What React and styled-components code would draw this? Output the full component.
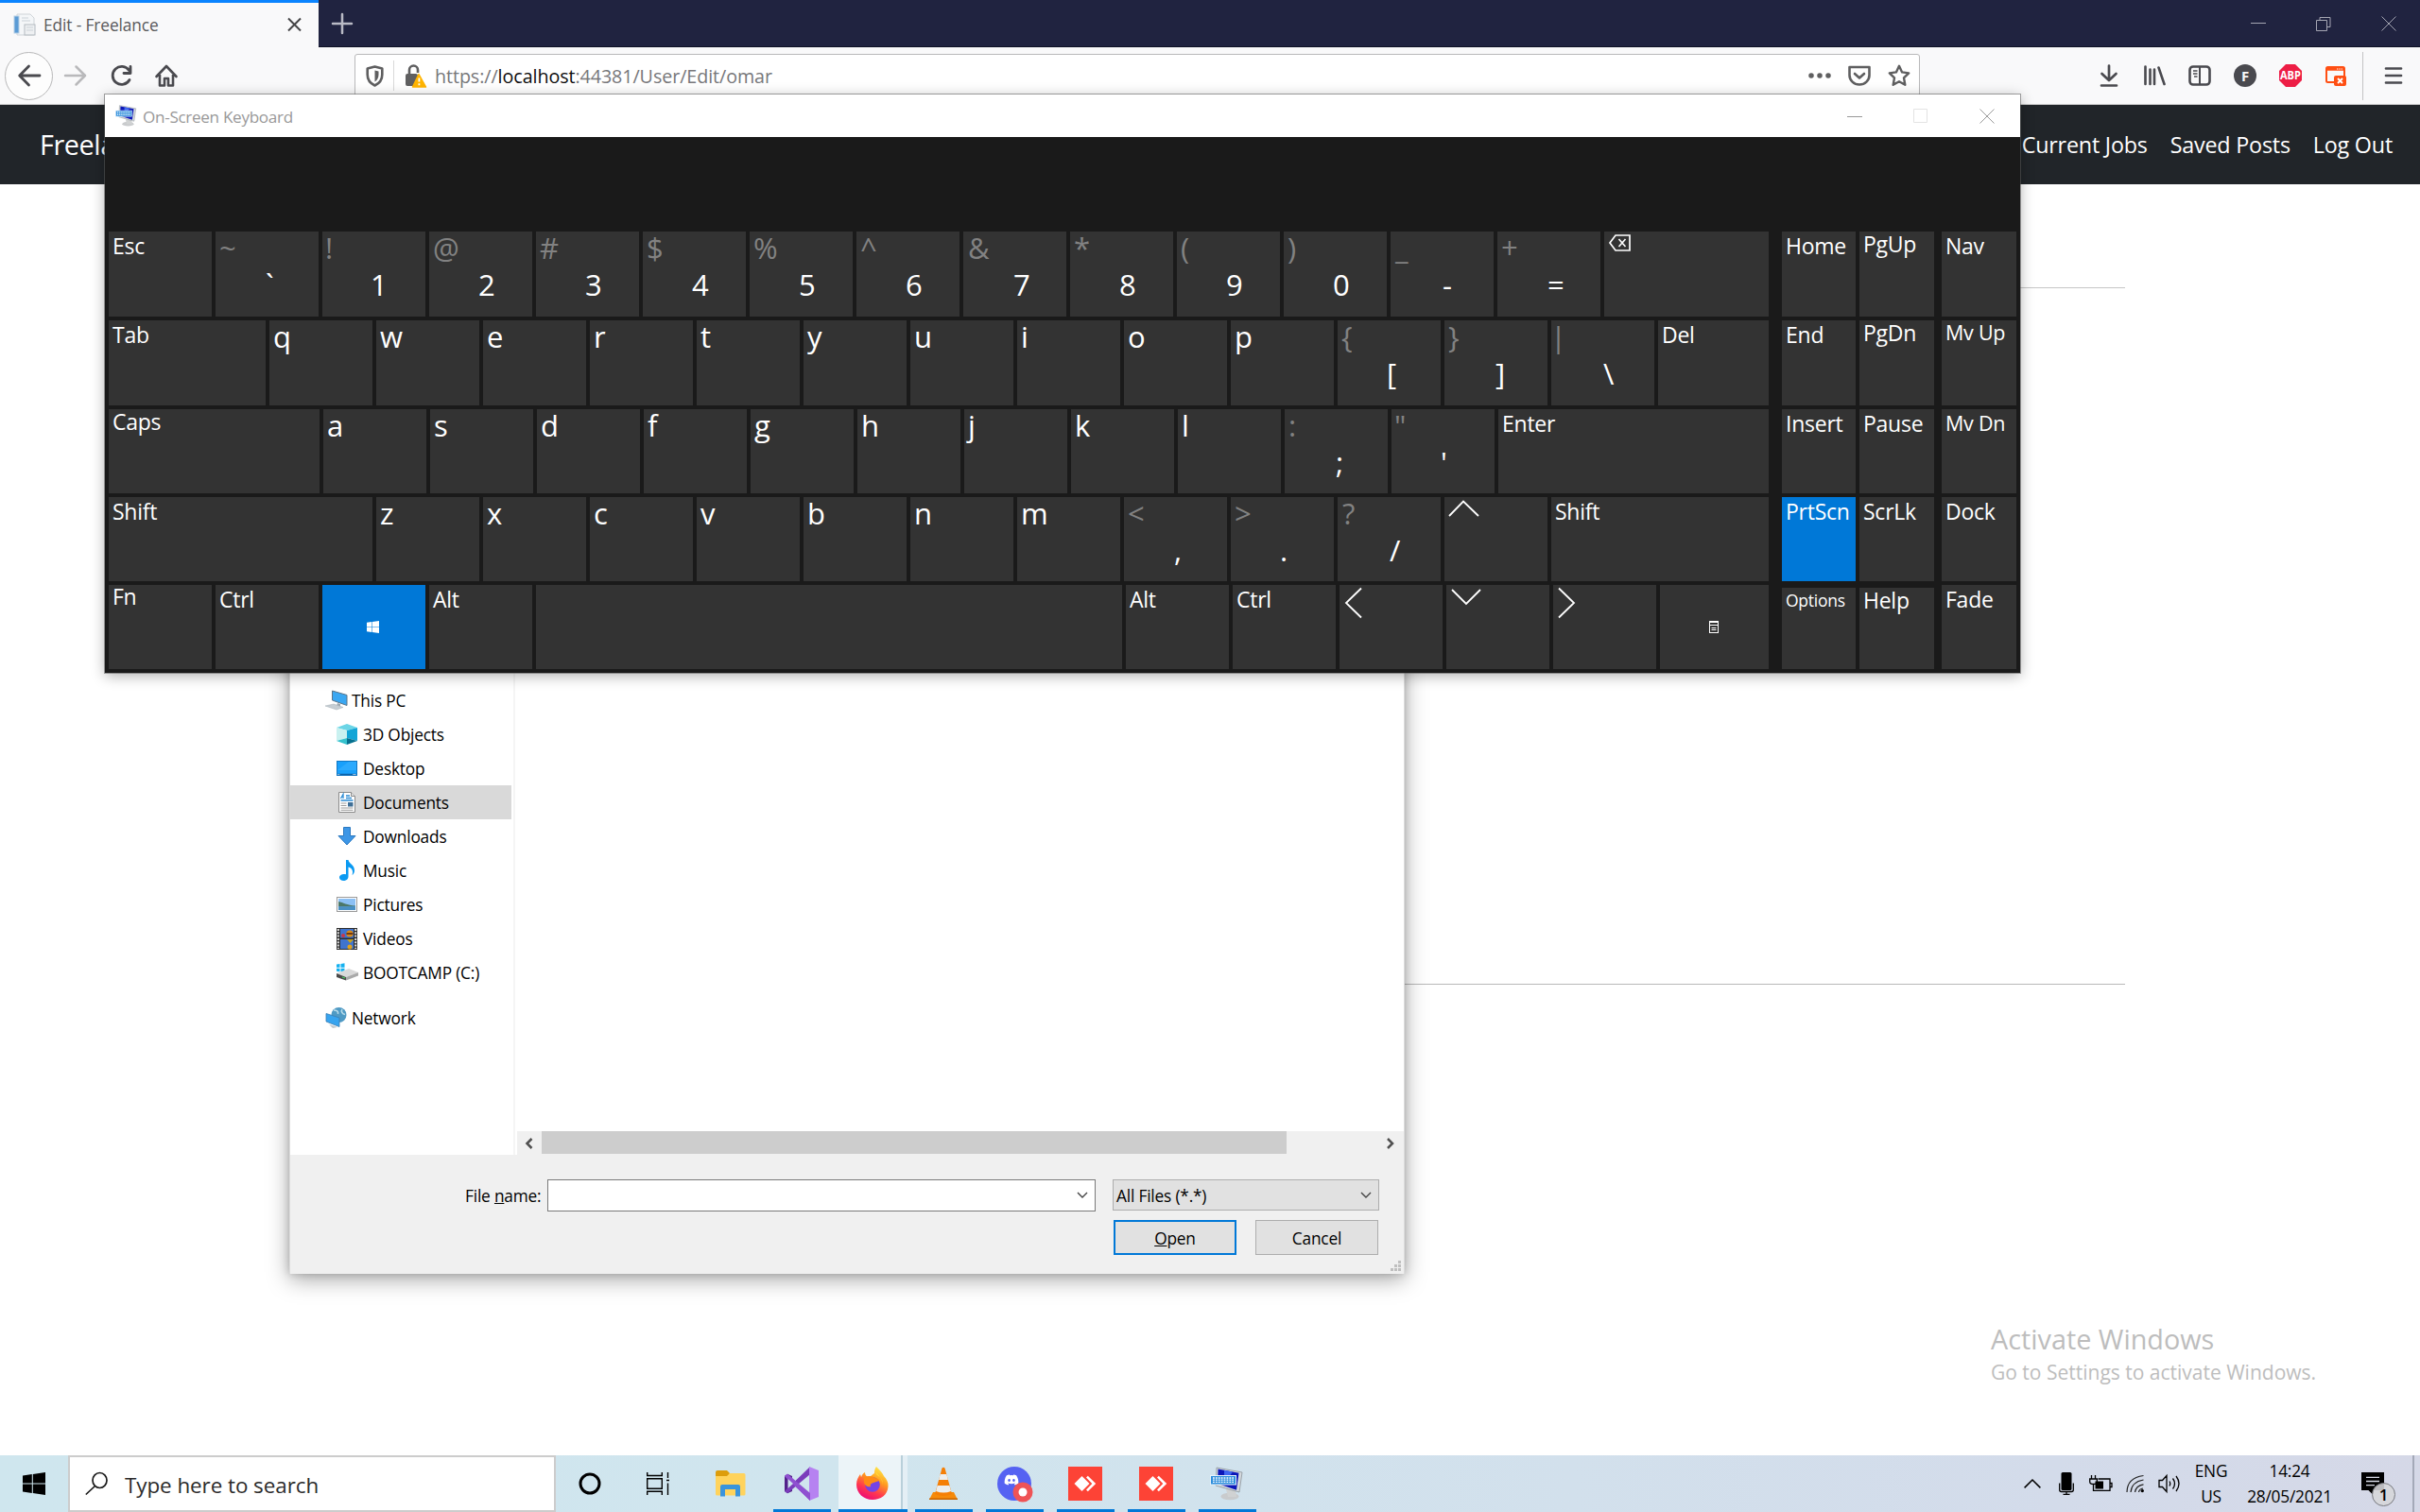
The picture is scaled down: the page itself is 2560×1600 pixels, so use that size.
import React from 'react';
import styled, { createGlobalStyle, css } from 'styled-components';
import { FaDiscord } from 'react-icons/fa';

const GlobalStyle = createGlobalStyle`
  * { box-sizing: border-box; }
  html, body { margin: 0; padding: 0; background: #fff; overflow: hidden; }
  body { font-family: "Open Sans", "Noto Sans", sans-serif; }
  svg { display: block; flex: none; overflow: visible; }
`;

/* ---------- shared text ---------- */
const Text = styled.span`
  font-size: ${(p) => p.$size}px;
  letter-spacing: ${(p) => p.$track || 0}px;
  line-height: ${(p) => p.$line || 24}px;
  color: ${(p) => p.$color || '#000'};
  padding-top: ${(p) => p.$drop || 0}px;
  white-space: pre;
`;

const Desktop = styled.div`
  position: relative;
  width: 2560px;
  height: 1600px;
  display: flex;
  flex-direction: column;
  overflow: hidden;
  background: #fff;
`;

/* ---------- browser ---------- */
const TabStrip = styled.header`
  height: 50px;
  flex: none;
  display: flex;
  align-items: stretch;
  background: #202340;
  border-bottom: 1px solid #0f1126;
`;
const Tab = styled.div`
  width: 337px;
  height: 50px;
  flex: none;
  display: flex;
  align-items: center;
  padding: 0 18px 1px 14px;
  background: #f9f9fa;
  border-top: 3px solid #0a84ff;
`;
const TabTitle = styled(Text)`
  flex: 1;
  margin-left: 8px;
`;
const NewTab = styled.div`
  display: flex;
  align-items: center;
  margin-left: 14px;
`;
const WindowControls = styled.div`
  margin-left: auto;
  display: flex;
  align-items: center;
  gap: ${(p) => p.$gap}px;
  padding-right: ${(p) => p.$end}px;
`;
const Toolbar = styled.div`
  height: 61px;
  flex: none;
  display: flex;
  align-items: center;
  padding-left: 5px;
  background: #f9f9fa;
  border-bottom: 1px solid #ccc;
`;
const BackButton = styled.div`
  width: 51px;
  height: 51px;
  border: 1.5px solid #b8b8b9;
  border-radius: 50%;
  background: #fdfdfd;
  display: flex;
  align-items: center;
  justify-content: center;
`;
const NavIcons = styled.div`
  display: flex;
  gap: 24px;
  margin-left: 12px;
  width: 307px;
`;
const UrlBar = styled.div`
  width: 1656px;
  height: 46px;
  display: flex;
  align-items: center;
  padding: 0 9px 0 11px;
  background: #fff;
  border: 1px solid #b9b9ba;
  border-radius: 3px;
`;
const UrlDivider = styled.i`
  width: 1px;
  height: 32px;
  margin: 0 11px 0 10px;
  background: #d9d9d9;
`;
const UrlText = styled(Text)`
  flex: 1;
  margin-left: 8px;
  b { font-weight: 400; color: #0c0c0d; }
`;
const UrlActions = styled.div`
  display: flex;
  align-items: center;
  gap: 18px;
`;
const Extensions = styled.div`
  display: flex;
  align-items: center;
  gap: 24px;
  margin-left: 188px;
`;
const MenuButton = styled.div`
  height: 51px;
  display: flex;
  align-items: center;
  margin-left: 16px;
  padding-left: 20px;
  border-left: 1px solid #c4c4c5;
`;
const SiteNav = styled.nav`
  height: 84px;
  flex: none;
  display: flex;
  align-items: center;
  justify-content: space-between;
  padding: 0 29px 0 42px;
  background: #212529;
`;
const SiteLinks = styled.div`
  display: flex;
  gap: 24px;
`;
const Page = styled.main`
  flex: 1;
  width: 1936px;
  margin: 0 auto;
  padding-top: 109px;
`;
const Rule = styled.hr`
  height: 1px;
  margin: 0 0 ${(p) => p.$after || 0}px;
  border: 0;
  background: ${(p) => p.$color};
`;
const Watermark = styled.div`
  position: absolute;
  left: 2106px;
  top: 1396px;
  display: flex;
  flex-direction: column;
`;

/* ---------- file dialog ---------- */
const Dialog = styled.section`
  position: absolute;
  left: 306px;
  top: 600px;
  width: 1180px;
  height: 748px;
  display: flex;
  flex-direction: column;
  background: #f0f0f0;
  border-left: 1px solid #dcdcdc;
  border-right: 1px solid #dcdcdc;
  box-shadow: 0 6px 22px rgba(0, 0, 0, 0.34), 0 0 8px rgba(0, 0, 0, 0.18);
`;
const DialogBody = styled.div`
  height: 622px;
  display: flex;
`;
const Tree = styled.div`
  width: 238px;
  padding-top: 123px;
  background: #fff;
  border-right: 2px solid #f5f5f5;
`;
const TreeRow = styled.div`
  width: 234px;
  height: 36px;
  display: flex;
  align-items: center;
  gap: ${(p) => (p.$root ? 4 : 5)}px;
  padding-left: ${(p) => (p.$root ? 37 : 48)}px;
  margin-top: ${(p) => (p.$spaced ? 12 : 0)}px;
  background: ${(p) => (p.$selected ? '#d9d9d9' : 'transparent')};
`;
const Files = styled.div`
  flex: 1;
  display: flex;
  flex-direction: column;
`;
const FileArea = styled.div`
  height: 597px;
  background: #fff;
`;
const ScrollBar = styled.div`
  height: 25px;
  display: flex;
  background: #f0f0f0;
  border-left: 2px solid #fff;
`;
const ScrollArrow = styled.div`
  width: 26px;
  display: flex;
  align-items: center;
  justify-content: center;
`;
const ScrollThumb = styled.div`
  width: 788px;
  height: 24px;
  margin-right: 97px;
  background: #cdcdcd;
`;
const DialogFooter = styled.div`
  display: flex;
  flex-direction: column;
  padding: 26px 26px 0 185px;
`;
const FieldRow = styled.div`
  height: 34px;
  display: flex;
  align-items: flex-start;
`;
const FieldLabel = styled(Text)`
  width: 87px;
`;
const Combo = styled.div`
  width: ${(p) => p.$w}px;
  height: ${(p) => p.$h}px;
  margin-right: ${(p) => p.$gap || 0}px;
  padding: 0 7px 0 3px;
  display: flex;
  align-items: center;
  justify-content: space-between;
  background: ${(p) => (p.$filled ? '#e1e1e1' : '#fff')};
  border: 1px solid ${(p) => (p.$filled ? '#adadad' : '#7a7a7a')};
`;
const ButtonRow = styled.div`
  display: flex;
  justify-content: flex-end;
  gap: 20px;
  margin: 9px 1px 0 0;
`;
const DialogButton = styled.div`
  width: 130px;
  height: 37px;
  display: flex;
  align-items: center;
  justify-content: center;
  padding-top: 1px;
  background: #e1e1e1;
  border: ${(p) => (p.$primary ? '2px solid #0078d7' : '1px solid #adadad')};
`;
const GripHolder = styled.div`
  display: flex;
  justify-content: flex-end;
  margin: 6px -23px 0 0;
`;

/* ---------- on-screen keyboard ---------- */
const Keyboard = styled.section`
  position: absolute;
  left: 111px;
  top: 100px;
  width: 2026px;
  height: 612px;
  display: flex;
  flex-direction: column;
  background: #1a1a1a;
  box-shadow: 0 0 0 1px rgba(90, 90, 90, 0.55), 0 3px 14px rgba(0, 0, 0, 0.32);
`;
const KeyboardTitle = styled.div`
  height: 45px;
  flex: none;
  display: flex;
  align-items: center;
  padding-left: 11px;
  background: #fff;
`;
const KeyboardCaption = styled(Text)`
  margin-left: 6px;
`;
const KeyArea = styled.div`
  display: flex;
  padding: 100px 0 0 4px;
`;
const Board = styled.div`
  width: 1756px;
  margin-right: ${(p) => p.$after || 0}px;
  display: flex;
  flex-direction: column;
  gap: 4px;
`;
const SideBoard = styled(Board)`
  width: auto;
`;
const KeyRow = styled.div`
  height: ${(p) => p.$h}px;
  display: flex;
  align-items: stretch;
  gap: 4px;
`;
const Key = styled.div`
  width: ${(p) => p.$w || 109}px;
  margin-top: ${(p) => p.$inset || 0}px;
  padding-left: 4px;
  display: flex;
  flex-direction: column;
  color: #fff;
  background: ${(p) => (p.$lit ? '#0078d7' : '#333')};
  ${(p) => p.$centered && css`
    align-items: center;
    justify-content: center;
    padding: 0 2px 1px 0;
  `}
`;
const Legend = styled.span`
  font-size: ${(p) => p.$size || 23}px;
  letter-spacing: -0.25px;
  line-height: ${(p) => 30 - 2 * (p.$rise || 0)}px;
  white-space: pre;
`;
const Glyph = styled.span`
  font-size: 31px;
  line-height: 34px;
  margin-left: ${(p) => p.$shift || 0}px;
  color: ${(p) => (p.$dim ? '#828282' : '#fff')};
`;
const LowerGlyph = styled(Glyph)`
  margin: 5px 0 0 ${(p) => 48 + (p.$shift || 0)}px;
`;

/* ---------- taskbar ---------- */
const Taskbar = styled.footer`
  height: 60px;
  flex: none;
  display: flex;
  background: linear-gradient(90deg, #cfe6ee 0%, #d0e5ee 35%, #d2e0ec 65%, #d3dbea 85%, #d5d8e7 100%);
`;
const BarCell = styled.div`
  width: ${(p) => p.$w}px;
  display: flex;
  flex-direction: column;
  align-items: center;
  justify-content: center;
`;
const Search = styled.div`
  width: 516px;
  display: flex;
  align-items: center;
  padding-left: 16px;
  gap: 18px;
  background: #fff;
  border: 2px solid #ccc;
`;
const Apps = styled.div`
  display: flex;
  margin-left: 4px;
`;
const AppButton = styled.div`
  width: ${(p) => (p.$active ? 73 : 61)}px;
  margin: 0 ${(p) => (p.$active ? 1 : 7)}px;
  display: flex;
  align-items: center;
  justify-content: center;
  border-bottom: 3px solid ${(p) => (p.$idle ? 'transparent' : '#0078d7')};
  padding: 3px 2px 0 0;
  ${(p) => p.$active && css`
    background: linear-gradient(90deg, #ecf4f8 66px, #b9d0da 66px, #b9d0da 68px, #e4eff5 68px);
  `}
`;
const Tray = styled.div`
  display: flex;
  margin-left: auto;
`;
const Notifications = styled.div`
  width: 75px;
  padding: 18px 0 0 21px;
  position: relative;
`;
const Badge = styled.div`
  position: absolute;
  left: 32px;
  top: 29px;
  width: 25px;
  height: 25px;
  display: flex;
  align-items: center;
  justify-content: center;
  border: 1px solid #77797f;
  border-radius: 50%;
  background: rgba(214, 214, 217, 0.88);
`;
const BadgeCount = styled(Text)`
  font-weight: 600;
`;
const ShowDesktop = styled.div`
  width: 8px;
  border-left: 2px solid #a4a9b8;
`;

/* ---------- drawings ---------- */
const Line = ({ w, h, d, color, sw = 1, vb, cap, fill = 'none' }) => (
  <svg width={w} height={h} viewBox={vb || `0 0 ${w} ${h}`}>
    <path d={d} stroke={color} strokeWidth={sw} fill={fill} strokeLinecap={cap} strokeLinejoin={cap} />
  </svg>
);

const PageIcon = () => (
  <svg width="24" height="24" viewBox="0 0 24 24">
    <path d="M4 1h14l4 4v18H4z" fill="#f4f6f8" stroke="#cfd4d8" />
    <rect x="1" y="3" width="5" height="18" fill="#5b9bd5" stroke="#b5cfe5" />
    <rect x="12" y="12" width="11" height="11" fill="#eef0f2" stroke="#b3bac0" />
    <path d="M14 15h7M14 18h7M9 5h7M9 8h9" stroke="#cbd2d8" />
  </svg>
);

const KeyboardMonitor = ({ size = 24 }) => (
  <svg width={size} height={size} viewBox="0 0 36 36">
    <ellipse cx="21" cy="31.500" rx="9.500" ry="3.800" fill="#c9cbcd" />
    <path d="M17 24h10l1 8h-9z" fill="#d0d2d3" />
    <path d="M7 1l27 5-3 21L6 20z" fill="#d4d8dc" stroke="#8d959c" strokeWidth=".8" />
    <path d="M8.500 2.500l22 4.200-2.500 18L8 18z" fill="#0c17b8" />
    <path d="M15 3.800l9 1.700-9 12z" fill="#3f66f0" />
    <rect x=".5" y="9.500" width="27" height="9.500" fill="#2f8fdc" stroke="#e7f3fc" />
    <path d="M3 12h22M3 14.200h22M3 16.400h22" stroke="#fff" strokeWidth="1.300" strokeDasharray="1.800 1.100" />
  </svg>
);

const LockWarning = () => (
  <svg width="24" height="24" viewBox="0 0 24 24">
    <path d="M5 11V6a4.500 4.500 0 0 1 9 0v3" fill="none" stroke="#5f5f60" strokeWidth="2.600" />
    <rect x="1" y="10" width="13" height="13" rx="2" fill="#5f5f60" />
    <path d="M15 10.500L22.500 24h-14z" fill="#ffb400" stroke="#ffb400" strokeWidth="1.500" strokeLinejoin="round" />
    <path d="M15.400 14.500v4M15.400 20.200v2" stroke="#fff" strokeWidth="1.800" />
  </svg>
);

const Shield = () => (
  <svg width="19" height="23" viewBox="0 0 19 23">
    <path d="M9.500 1.500L17.300 3.500V10c0 6-3.500 9.500-7.800 11.500C5.200 19.500 1.700 16 1.700 10V3.500z" fill="none" stroke="#5f5f60" strokeWidth="2.600" strokeLinejoin="round" />
    <path d="M9.500 5.500L13.500 6.500V10c0 3.800-1.600 6-4 7.500z" fill="#5f5f60" />
  </svg>
);

const Library = () => (
  <svg width="24" height="24" viewBox="0 0 24 24">
    <path d="M2.500 2.500v18.500M7.500 5.500v15.500M12 5.500v15.500M16.500 3.500l6 17.500" stroke="#4a4a4f" strokeWidth="2.600" strokeLinecap="round" />
  </svg>
);

const SidebarIcon = () => (
  <svg width="24" height="24" viewBox="0 0 24 24">
    <rect x="1.500" y="2.500" width="21" height="19" rx="3.500" fill="none" stroke="#4a4a4f" strokeWidth="2.600" />
    <path d="M12 3v18" stroke="#4a4a4f" strokeWidth="2" />
    <path d="M5 7h4.500M5 10h4.500M6 13h3.500" stroke="#4a4a4f" strokeWidth="1.500" />
  </svg>
);

const RoundF = () => (
  <svg width="24" height="24" viewBox="0 0 24 24">
    <circle cx="12" cy="12" r="12" fill="#4a4a4f" />
    <text x="12" y="17.500" textAnchor="middle" fontFamily="Open Sans, sans-serif" fontWeight="700" fontSize="15" fill="#f9f9fa">F</text>
  </svg>
);

const Abp = () => (
  <svg width="24" height="24" viewBox="0 0 24 24">
    <path d="M7 0h10l7 7v10l-7 7H7l-7-7V7z" fill="#ed1e45" />
    <text x="12" y="16" textAnchor="middle" textLength="22" lengthAdjust="spacingAndGlyphs" fontFamily="Open Sans, sans-serif" fontWeight="700" fontSize="12" fill="#fff">ABP</text>
  </svg>
);

const PopupBlocked = () => (
  <svg width="24" height="24" viewBox="0 0 24 24">
    <rect x="2" y="3" width="19" height="16" rx="1.500" fill="none" stroke="#ff4f13" strokeWidth="2" />
    <path d="M2 5h19" stroke="#ff4f13" strokeWidth="3.500" />
    <path d="M13 5h6" stroke="#fff" strokeWidth="1" strokeDasharray="1.300 1" />
    <rect x="10" y="12" width="13" height="11" rx="2" fill="#ff4f13" />
    <path d="M14 15l5 5M19 15l-5 5" stroke="#fff" strokeWidth="1.900" />
  </svg>
);

const WinLogo = ({ size, color = '#000' }) => (
  <svg width={size} height={size} viewBox="0 0 24 24">
    <path d="M0 3.400L9.800 2v9.500H0zM10.800 1.900L24 0v11.500H10.800zM0 12.500h9.800V22L0 20.600zM10.800 12.500H24V24l-13.200-1.900z" fill={color} />
  </svg>
);

const treeIcons = {
  pc: (
    <svg width="24" height="24" viewBox="0 0 24 24">
      <path d="M7.500 2L23 6.500v11L7.500 12z" fill="#3aa7f2" stroke="#5c7487" />
      <path d="M13 15l3 1v3l-4-1z" fill="#9aa6ae" />
      <path d="M0 18l9-2 10 3.500-7 2.500z" fill="#c5cdd3" stroke="#a7b0b7" strokeWidth=".5" />
    </svg>
  ),
  cube: (
    <svg width="24" height="24" viewBox="0 0 24 24">
      <path d="M1 5l11-4 11 4-11 3z" fill="#6bd5e6" />
      <path d="M1 5l11 3v8L1 19z" fill="#c9f1f0" />
      <path d="M23 5L12 8v8l11 3z" fill="#12a5d6" />
      <path d="M1 19l11-3v7z" fill="#35c2cd" />
      <path d="M23 19l-11-3v7z" fill="#04708f" />
    </svg>
  ),
  desktop: (
    <svg width="24" height="24" viewBox="0 0 24 24">
      <rect x="1.500" y="4.500" width="21" height="15" fill="#19a0fb" stroke="#1478c4" />
      <path d="M2 14L14 5h8v9z" fill="#3bb0ff" opacity=".6" />
      <path d="M2 18.500h20" stroke="#0b62a8" strokeWidth="1.500" />
      <path d="M2.500 18.500h2M18.500 18.500h3" stroke="#fff" strokeDasharray="1 .8" />
    </svg>
  ),
  docs: (
    <svg width="24" height="24" viewBox="0 0 24 24">
      <path d="M3.500 1.500h13l4 4v17h-17z" fill="#fff" stroke="#8a8a8a" />
      <path d="M16.500 1.500v4h4" fill="#e4e4e4" stroke="#8a8a8a" />
      <path d="M5.500 8L8 3.500V8M11 5h4M11 7.500h6M5.500 10h13" stroke="#2a8bd4" strokeWidth="1.300" fill="none" />
      <path d="M5.500 13h6M5.500 15.500h6M5.500 18h13M5.500 20.300h13" stroke="#9b9b9b" />
      <rect x="13" y="12" width="5.500" height="4.500" fill="#3f6f96" />
    </svg>
  ),
  down: (
    <svg width="24" height="24" viewBox="0 0 24 24">
      <path d="M8.500 2.500h7v9H21L12 21 3 11.500h5.500z" fill="#3d96e6" stroke="#2a78c0" />
    </svg>
  ),
  music: (
    <svg width="24" height="24" viewBox="0 0 24 24">
      <path d="M11 1h2.500c.5 4 6.500 5 6.500 11 0 2.500-1 4-2.500 5 1.500-4 0-7.500-4-8.500v10c0 3-2.500 4.500-5 4.500S4 21.500 4 19.500 6.500 16 9 16c.8 0 1.400.1 2 .3z" fill="#0a9af2" />
    </svg>
  ),
  pics: (
    <svg width="24" height="24" viewBox="0 0 24 24">
      <rect x="1.500" y="4.500" width="21" height="15" fill="#fff" stroke="#9a9a9a" />
      <rect x="3" y="6" width="18" height="12" fill="#8cc0f4" />
      <path d="M3 9c5 1 9 4 18 4.500v1H3z" fill="#4d7868" />
      <path d="M3 14c7 1 11-.5 18 0v4H3z" fill="#4a90c4" />
    </svg>
  ),
  video: (
    <svg width="24" height="24" viewBox="0 0 24 24">
      <rect x="1" y="1" width="22" height="23" fill="#2e2e2e" />
      <rect x="5" y="2" width="14" height="9.500" fill="#3f74cf" />
      <rect x="5" y="13" width="14" height="10" fill="#3f74cf" />
      <path d="M2.800 2v21M21.200 2v21" stroke="#e6e6e6" strokeWidth="2" strokeDasharray="2 1.300" />
      <circle cx="15" cy="7" r="3.600" fill="#d98a18" />
      <path d="M11.500 7h7" stroke="#502010" strokeWidth="1.500" />
      <circle cx="8" cy="9" r="2" fill="#c8384a" />
      <path d="M12 13h7l-3.500 4z" fill="#c7a31c" />
      <circle cx="15" cy="21" r="2.500" fill="#e0a21c" />
    </svg>
  ),
  disk: (
    <svg width="24" height="24" viewBox="0 0 24 24">
      <path d="M1 3.500L4.500 3v3.700H1zM5.500 2.900L9.500 2.300v4.400h-4zM1 7.700h3.500v3.500L1 10.800zM5.500 7.700h4v4l-4-.5z" fill="#14b1f0" />
      <path d="M1 13l13-5 10 4-13 5z" fill="#d9d9d9" />
      <path d="M1 13l10 4v3.500L1 17z" fill="#4a4a4a" />
      <path d="M11 17l13-5v3.500l-13 5z" fill="#a9a9a9" />
      <path d="M7 17l3 1" stroke="#46d05a" strokeWidth="1.200" />
    </svg>
  ),
  network: (
    <svg width="24" height="24" viewBox="0 0 24 24">
      <circle cx="14.500" cy="9" r="8" fill="#4f9ac4" />
      <path d="M9 4c4 0 5 1.500 4.500 4M18 3c-1.500 2 0 5 3 5.500" stroke="#b6dbea" strokeWidth="1.600" fill="none" />
      <path d="M1 7.500L15 12v9.500L1 16z" fill="#37a4ef" stroke="#3b7fb4" strokeWidth=".8" />
      <path d="M4 19l5 1.500 4 1.500-5 1z" fill="#c2c8cc" />
    </svg>
  ),
};

const FolderIcon = () => (
  <svg width="33" height="28" viewBox="0 0 33 28">
    <path d="M1 2a2 2 0 0 1 2-2h10l3 3-2 4H1z" fill="#dd9d0c" />
    <path d="M1 6h12l3-3h15a1.500 1.500 0 0 1 1.500 1.500V25a1.500 1.500 0 0 1-1.500 1.500H2.500A1.500 1.500 0 0 1 1 25z" fill="#ffd35c" />
    <path d="M6 27.500V17a2 2 0 0 1 2-2h17a2 2 0 0 1 2 2v10.500h-5V20H11v7.500z" fill="#3a94dc" />
  </svg>
);
const VisualStudio = () => (
  <svg width="36" height="36" viewBox="0 0 36 36">
    <path d="M0 10l3-2.200L8 10v16l-5 2.200L0 26z" fill="#52218a" />
    <path d="M0 10l3-2.200L27 31v5z" fill="#9353d6" />
    <path d="M0 26l3 2.200L27 8V0z" fill="#7a3cbb" />
    <path d="M26 0l10 4v28l-10 4z" fill="#b682f1" />
    <path d="M3 7.800L27 28v8L0 10z" fill="#8f50d0" />
    <path d="M3.500 13v10l5.500-5z" fill="#cfe4ee" />
  </svg>
);
const Firefox = () => (
  <svg width="36" height="36" viewBox="0 0 36 36">
    <defs>
      <linearGradient id="fox" x1=".8" y1="0" x2=".3" y2="1">
        <stop offset="0" stopColor="#fff44f" />
        <stop offset=".4" stopColor="#ff9a1f" />
        <stop offset=".72" stopColor="#ff3750" />
        <stop offset="1" stopColor="#eb0878" />
      </linearGradient>
    </defs>
    <path d="M22 0c4 4 6 6 8 10 3 3 5 7 4.500 11C34 30 26.500 35 18 35 8.500 35 1 28 1 19c0-5 2-8 4-11l1 3c1-3 3-4.500 4-5 0 2 1 4 3 5 3 0 5-3 7-4 0-3 .5-5 2-7z" fill="url(#fox)" />
    <circle cx="18" cy="19" r="7.800" fill="#7543e4" />
    <path d="M9 11c5-2 9-1 12 1 2 1 4 1 4 3l-6 2c-3 1-4 2-3 4-3 1-6-1-7-4z" fill="#ff8a16" />
    <path d="M21 5c5 5 8 10 8 15 0-4-1-7-3-9-3-2-5-3-5-6z" fill="#ffd93a" />
  </svg>
);
const Cone = () => (
  <svg width="32" height="36" viewBox="0 0 32 36">
    <path d="M5 27h22l4 8H1z" fill="#f58a0b" />
    <path d="M1 33.500h30V35H1z" fill="#c96400" />
    <path d="M14.500 1.500q1.500-1.500 3 0L25 29q-9 4-18 0z" fill="#f57f06" />
    <path d="M12.700 8h6.600l1.600 6h-9.800zM9.600 20h12.800l1.700 6q-8 3-16 0z" fill="#eceeee" />
  </svg>
);
const DiscordIcon = () => (
  <svg width="36" height="36" viewBox="0 0 36 36">
    <circle cx="18" cy="18" r="18" fill="#5562f2" />
    <FaDiscord x="7" y="6" width="23" height="24" color="#fff" />
    <circle cx="27" cy="27" r="10.500" fill="#ef5355" />
    <circle cx="27" cy="27" r="4.500" fill="#fff" />
  </svg>
);
const AnyDesk = () => (
  <svg width="36" height="36" viewBox="0 0 36 36">
    <rect width="36" height="36" fill="#fd4336" />
    <path d="M14.500 10l8 8-8 8-8-8z" fill="#fff" />
    <path d="M19 11.500l1.800-1.800L29.200 18l-8.400 8.300L19 24.500l6.300-6.500z" fill="#fff" />
  </svg>
);

/* ---------- keyboard data ---------- */
const rows = [
  { h: 90, keys: [{ t: 'Esc' }, ['~', '`', 0, 1], ['!', '1', -1, -1], ['@', '2'], ['#', '3'], ['$', '4'], ['%', '5'], ['^', '6'], ['&', '7', 1, 1], ['*', '8'], ['(', '9'], [')', '0'], ['_', '-', 1, 3], ['+', '=', 0, 1], { icon: 'back', w: 174 }] },
  { h: 90, keys: [{ t: 'Tab', w: 166 }, 'q', 'w', 'e', 'r', 't', 'y', 'u', 'i', 'o', 'p', ['{', '['], ['}', ']', 0, 2], ['|', '\\', -5, 3], { t: 'Del', w: 117 }] },
  { h: 89, keys: [{ t: 'Caps', w: 223, rise: 2 }, 'a', 's', 'd', 'f', 'g', 'h', 'j', 'k', 'l', [':', ';', 0, 2], ['"', "'", -1, 0], { t: 'Enter', w: 286 }] },
  { h: 89, keys: [{ t: 'Shift', w: 279 }, 'z', 'x', 'c', 'v', 'b', 'n', 'm', ['<', ',', 0, 1], ['>', '.'], ['?', '/', 1, 3], { icon: 'up' }, { t: 'Shift', w: 230 }] },
  { h: 89, keys: [{ t: 'Fn', rise: 2.5 }, { t: 'Ctrl' }, { icon: 'win', lit: true, mid: true }, { t: 'Alt' }, { t: '', w: 620 }, { t: 'Alt' }, { t: 'Ctrl' }, { icon: 'left' }, { icon: 'down' }, { icon: 'right' }, { icon: 'menu', mid: true, w: 115 }] },
];
const sideRows = [
  [{ t: 'Home', w: 78 }, { t: 'PgUp', rise: 2, w: 79 }],
  [{ t: 'End', w: 78 }, { t: 'PgDn', rise: 2, w: 79 }],
  [{ t: 'Insert', w: 78 }, { t: 'Pause', w: 79 }],
  [{ t: 'PrtScn', lit: true, w: 78 }, { t: 'ScrLk', w: 79 }],
  [{ t: 'Options', size: 17.5, rise: 2, inset: 3, w: 78 }, { t: 'Help', rise: 2, inset: 3, w: 79 }],
];
const farRows = [
  { t: 'Nav', w: 79 },
  { t: 'Mv Up', size: 21.5, rise: 2, w: 79 },
  { t: 'Mv Dn', size: 21.5, w: 79 },
  { t: 'Dock', w: 79 },
  { t: 'Fade', w: 79 },
];
const heights = rows.map((r) => r.h);

const keyIcons = {
  back: (
    <svg width="30" height="24" viewBox="0 0 30 24">
      <path d="M2 9L8 1h15v16H8z" transform="translate(0 3)" fill="none" stroke="#fff" strokeWidth="1.700" />
      <path d="M11.500 8l7 8M18.500 8l-7 8" stroke="#fff" strokeWidth="1.600" />
    </svg>
  ),
  up: <Line w={34} h={24} d="M1 20L16 4.500 32 20" color="#fff" sw={1.800} />,
  down: <Line w={34} h={24} d="M2 5L17 20 32 5" color="#fff" sw={1.800} />,
  left: <Line w={24} h={38} d="M19 3.500L3 19 19 34.500" color="#fff" sw={1.800} />,
  right: <Line w={24} h={38} d="M2 3.500L18 19 2 34.500" color="#fff" sw={1.800} />,
  win: <WinLogo size={13} color="#fff" />,
  menu: (
    <svg width="10" height="13" viewBox="0 0 10 13">
      <rect x=".5" y=".5" width="9" height="12" fill="none" stroke="#fff" />
      <path d="M2.500 7.500h5M2.500 9.500h5M0 1.500h10M0 4.500h10" stroke="#fff" />
    </svg>
  ),
};

function KeyCap({ data }) {
  if (typeof data === 'string') {
    return <Key><Glyph>{data}</Glyph></Key>;
  }
  if (Array.isArray(data)) {
    return (
      <Key>
        <Glyph $dim $shift={data[2]}>{data[0]}</Glyph>
        <LowerGlyph $shift={data[3]}>{data[1]}</LowerGlyph>
      </Key>
    );
  }
  return (
    <Key $w={data.w} $lit={data.lit} $inset={data.inset} $centered={data.mid}>
      {data.icon ? keyIcons[data.icon] : <Legend $size={data.size} $rise={data.rise}>{data.t}</Legend>}
    </Key>
  );
}

const tree = [
  { icon: 'pc', label: 'This PC', root: true },
  { icon: 'cube', label: '3D Objects' },
  { icon: 'desktop', label: 'Desktop' },
  { icon: 'docs', label: 'Documents', selected: true },
  { icon: 'down', label: 'Downloads' },
  { icon: 'music', label: 'Music' },
  { icon: 'pics', label: 'Pictures' },
  { icon: 'video', label: 'Videos' },
  { icon: 'disk', label: 'BOOTCAMP (C:)' },
  { icon: 'network', label: 'Network', root: true, spaced: true },
];

const Ui = (props) => <Text $size={17.3} $track={-0.18} $line={24} $drop={2} {...props} />;

function Browser() {
  return (
    <>
      <TabStrip>
        <Tab>
          <PageIcon />
          <TabTitle $size={17.3} $track={-0.1} $color="#5a5a5c" $drop={1}>Edit - Freelance</TabTitle>
          <Line w={15} h={14} d="M1 .5L14 13.500M14 .5L1 13.500" color="#444446" sw={2} />
        </Tab>
        <NewTab><Line w={22} h={22} d="M11 1v20M1 11h20" color="#b9bac5" sw={2.500} cap="round" /></NewTab>
        <WindowControls $gap={53} $end={25}>
          <Line w={16} h={16} d="M0 7.500h16" color="#a5a6b3" />
          <Line w={16} h={16} d="M.5 4.500h11v11H.5zM4 4.500v-3h11v10h-3" color="#a5a6b3" />
          <Line w={16} h={16} d="M.5 .5l15 15M15.500 .5l-15 15" color="#a5a6b3" />
        </WindowControls>
      </TabStrip>
      <Toolbar>
        <BackButton><Line w={24} h={24} d="M23 12H2M11.500 2L1.700 12l9.800 10" color="#4a4a4f" sw={2.800} cap="round" /></BackButton>
        <NavIcons>
          <Line w={24} h={24} d="M1 12h21M12.500 2.500L22 12l-9.500 9.500" color="#b9b9bb" sw={2.500} cap="round" />
          <Line w={24} h={24} d="M21 16.500A9.500 9.500 0 1 1 20.500 6.500M22 2.500v7h-7" color="#4a4a4f" sw={2.800} cap="round" />
          <Line w={24} h={24} d="M1.500 13L12 2l10.500 11M5 11v11.500h5V15h4v7.500h5V11" color="#4a4a4f" sw={2.600} cap="round" />
        </NavIcons>
        <UrlBar>
          <Shield />
          <UrlDivider />
          <LockWarning />
          <UrlText $size={19.7} $track={-0.07} $color="#77777a" $line={28} $drop={1}>https://<b>localhost</b>:44381/User/Edit/omar</UrlText>
          <UrlActions>
            <Line w={24} h={24} d="M3 12h.01M12 12h.01M21 12h.01" color="#5f5f60" sw={5.500} cap="round" />
            <Line w={24} h={24} d="M1.500 3h21v8.500a10.500 10 0 0 1-21 0zM7 10l5 4.500 5-4.500" color="#5f5f60" sw={2.600} cap="round" />
            <Line w={24} h={24} d="M12 1.800l3.100 6.600 7.100 1-5.200 5 1.300 7.400L12 18.200 5.700 21.800 7 14.400l-5.200-5 7.100-1z" color="#5f5f60" sw={2.400} cap="round" />
          </UrlActions>
        </UrlBar>
        <Extensions>
          <Line w={24} h={24} d="M12 1.500v15M4.500 10l7.500 7 7.500-7M4 22.500h16" color="#4a4a4f" sw={2.700} cap="round" />
          <Library />
          <SidebarIcon />
          <RoundF />
          <Abp />
          <PopupBlocked />
        </Extensions>
        <MenuButton><Line w={24} h={24} d="M4 4.500h16M4 12h16M4 19.500h16" color="#4a4a4f" sw={2.700} cap="round" /></MenuButton>
      </Toolbar>
      <SiteNav>
        <Text $size={28.8} $track={-0.4} $color="#fff" $line={40}>Freelance</Text>
        <SiteLinks>
          <Text $size={23.3} $track={-0.2} $color="#fff" $line={40}>Current Jobs</Text>
          <Text $size={23.3} $track={-0.2} $color="#fff" $line={40}>Saved Posts</Text>
          <Text $size={23.3} $track={-0.2} $color="#fff" $line={40}>Log Out</Text>
        </SiteLinks>
      </SiteNav>
      <Page>
        <Rule $color="#c6c6c6" $after={736} />
        <Rule $color="#b8b8b8" />
      </Page>
    </>
  );
}

function OpenDialog() {
  return (
    <Dialog>
      <DialogBody>
        <Tree>
          {tree.map((n) => (
            <TreeRow key={n.label} $root={n.root} $selected={n.selected} $spaced={n.spaced}>
              {treeIcons[n.icon]}
              <Ui>{n.label}</Ui>
            </TreeRow>
          ))}
        </Tree>
        <Files>
          <FileArea />
          <ScrollBar>
            <ScrollArrow><Line w={10} h={12} d="M7.500 1l-5 5 5 5" color="#505050" sw={2.500} /></ScrollArrow>
            <ScrollThumb />
            <ScrollArrow><Line w={10} h={12} d="M2 1l5 5-5 5" color="#505050" sw={2.500} /></ScrollArrow>
          </ScrollBar>
        </Files>
      </DialogBody>
      <DialogFooter>
        <FieldRow>
          <FieldLabel $size={17.3} $track={-0.18} $line={26} $drop={5}>File <u>n</u>ame:</FieldLabel>
          <Combo $w={580} $h={34} $gap={18}>
            <span />
            <Line w={12} h={8} d="M1 1l5 5 5-5" color="#444" sw={1.400} />
          </Combo>
          <Combo $w={282} $h={33} $filled>
            <Ui>All Files (*.*)</Ui>
            <Line w={12} h={8} d="M1 1l5 5 5-5" color="#444" sw={1.400} />
          </Combo>
        </FieldRow>
        <ButtonRow>
          <DialogButton $primary><Ui><u>O</u>pen</Ui></DialogButton>
          <DialogButton><Ui>Cancel</Ui></DialogButton>
        </ButtonRow>
        <GripHolder>
          <Line w={11} h={11} d="M8 0h3v3H8zM8 4h3v3H8zM8 8h3v3H8zM4 4h3v3H4zM4 8h3v3H4zM0 8h3v3H0z" color="none" fill="#bfbfbf" />
        </GripHolder>
      </DialogFooter>
    </Dialog>
  );
}

function OnScreenKeyboard() {
  return (
    <Keyboard>
      <KeyboardTitle>
        <KeyboardMonitor size={23} />
        <KeyboardCaption $size={17.1} $track={-0.3} $color="#999" $drop={2}>On-Screen Keyboard</KeyboardCaption>
        <WindowControls $gap={54} $end={27}>
          <Line w={16} h={16} d="M0 8.500h16" color="#999" />
          <Line w={16} h={16} d="M.5 .5h14v14H.5z" color="#e3e3e3" />
          <Line w={16} h={16} d="M.5 .5l15 15M15.500 .5l-15 15" color="#999" />
        </WindowControls>
      </KeyboardTitle>
      <KeyArea>
        <Board $after={14}>
          {rows.map((row, i) => (
            <KeyRow key={i} $h={row.h}>
              {row.keys.map((k, j) => <KeyCap key={j} data={k} />)}
            </KeyRow>
          ))}
        </Board>
        <SideBoard $after={8}>
          {sideRows.map((row, i) => (
            <KeyRow key={i} $h={heights[i]}>
              {row.map((k) => <KeyCap key={k.t} data={k} />)}
            </KeyRow>
          ))}
        </SideBoard>
        <SideBoard>
          {farRows.map((k, i) => (
            <KeyRow key={k.t} $h={heights[i]}><KeyCap data={k} /></KeyRow>
          ))}
        </SideBoard>
      </KeyArea>
    </Keyboard>
  );
}

function SystemTaskbar() {
  return (
    <Taskbar>
      <BarCell $w={72}><WinLogo size={24} /></BarCell>
      <Search>
        <Line w={24} h={24} d="M23 8.500a7.500 8 0 1 1-15 0 7.500 8 0 0 1 15 0zM10.500 14.500L.8 23.500" color="#1a1a1a" sw={1.700} />
        <Text $size={22.4} $track={-0.05} $color="#2b2b2b" $line={32} $drop={3}>Type here to search</Text>
      </Search>
      <BarCell $w={72}>
        <svg width="24" height="24" viewBox="0 0 24 24"><circle cx="12" cy="12" r="10" fill="none" stroke="#000" strokeWidth="3" /></svg>
      </BarCell>
      <BarCell $w={72}>
        <Line w={24} h={24} d="M.7 0v3.500h15.600V0M.7 6.700h15.600v10.600H.7zM.7 24v-3.800h15.600V24M22.500 0v6M22.500 11.500V24M21 8.500h3" color="#000" sw={1.400} />
      </BarCell>
      <Apps>
        <AppButton $idle><FolderIcon /></AppButton>
        <AppButton><VisualStudio /></AppButton>
        <AppButton $active><Firefox /></AppButton>
        <AppButton><Cone /></AppButton>
        <AppButton><DiscordIcon /></AppButton>
        <AppButton><AnyDesk /></AppButton>
        <AppButton><AnyDesk /></AppButton>
        <AppButton><KeyboardMonitor size={36} /></AppButton>
      </Apps>
      <Tray>
        <BarCell $w={36}><Line w={18} h={10} d="M.6 9.400L9 1l8.400 8.400" color="#000" sw={1.500} /></BarCell>
        <BarCell $w={36}>
          <svg width="16" height="24" viewBox="0 0 16 24">
            <rect x="2.500" y="0" width="11" height="19" rx="1.500" />
            <path d="M.7 11.500v7q0 2 2 2h10.600q2 0 2-2v-7M8 20.500v3M4.500 23.400h7" fill="none" stroke="#000" strokeWidth="1.300" />
          </svg>
        </BarCell>
        <BarCell $w={36}>
          <svg width="24" height="18" viewBox="0 0 24 18">
            <path d="M2.500 0v4M6.500 0v4M.7 4h7.600v3q0 2.500-3.800 2.500T.7 7zM4.500 10v6.300H22V4H9.500M22 8.500h2v4h-2" fill="none" stroke="#000" strokeWidth="1.300" />
            <path d="M6.500 6.500h8.500v8H6.500z" />
          </svg>
        </BarCell>
        <BarCell $w={37}>
          <svg width="20" height="20" viewBox="0 0 20 20">
            <path d="M1 19Q1 4 18.500 1.500M5 19Q6 8 18.500 6M9.500 19q1-7 9-8.200M13.500 19q.5-3.500 4.500-4" fill="none" stroke="#222" strokeWidth="1.200" />
            <circle cx="17.300" cy="17.600" r="1.700" />
          </svg>
        </BarCell>
        <BarCell $w={34}>
          <Line w={23} h={20} d="M1 6.500h3.500L9 1.500v17l-4.500-5H1zM12 7.500q1.500 2.500 0 5M15.500 4.500q4 5.500 0 11M19 2q6 8 0 16" color="#000" sw={1.300} />
        </BarCell>
        <BarCell $w={56}>
          <Text $size={17.3} $track={-0.2} $line={27}>ENG</Text>
          <Text $size={17.3} $track={-0.2} $line={27}>US</Text>
        </BarCell>
        <BarCell $w={110}>
          <Text $size={17.3} $track={-0.2} $line={27}>14:24</Text>
          <Text $size={17.3} $track={-0.2} $line={27}>28/05/2021</Text>
        </BarCell>
        <Notifications>
          <svg width="24" height="24" viewBox="0 0 24 24">
            <path d="M0 0h24v19H12.500v5l-5-5H0z" />
            <path d="M5 5.300h14M5 9.500h14M5 13.700h9" stroke="#d6d9e5" strokeWidth="1.300" />
          </svg>
          <Badge><BadgeCount $size={17} $line={22}>1</BadgeCount></Badge>
        </Notifications>
        <ShowDesktop />
      </Tray>
    </Taskbar>
  );
}

export default function App() {
  return (
    <Desktop>
      <GlobalStyle />
      <Browser />
      <SystemTaskbar />
      <Watermark>
        <Text $size={28.8} $track={0} $color="#bdbdbd" $line={42}>Activate Windows</Text>
        <Text $size={21} $track={0} $color="#bdbdbd" $line={28}>Go to Settings to activate Windows.</Text>
      </Watermark>
      <OpenDialog />
      <OnScreenKeyboard />
    </Desktop>
  );
}
